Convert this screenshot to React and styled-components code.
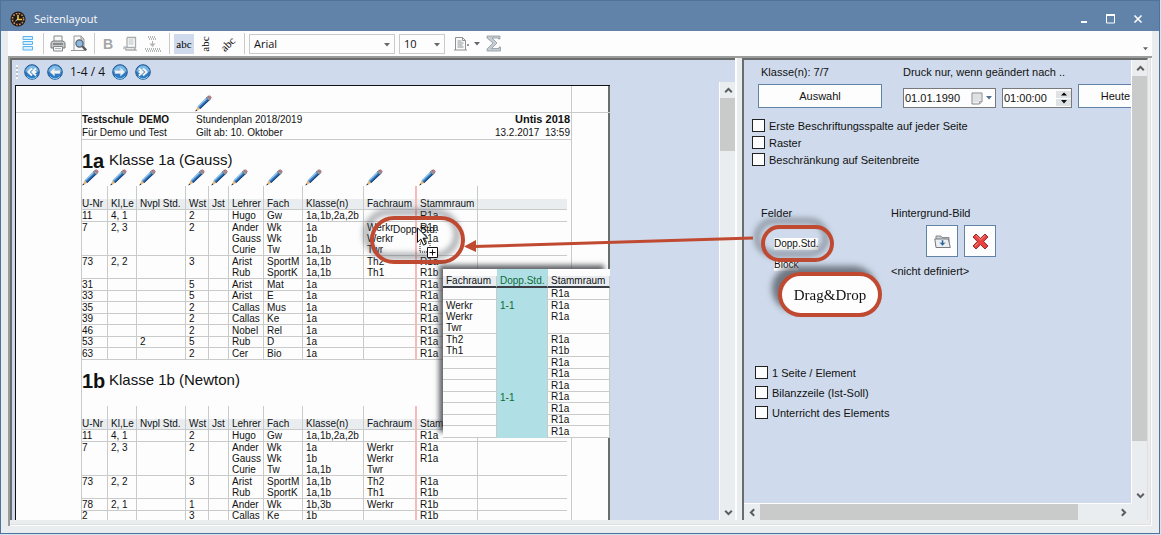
import React from 'react';
import styled, { createGlobalStyle, css } from 'styled-components';

const c = {
  title: '#6182a9',
  edge: '#4f749b',
  chrome: '#e9edf0',
  pane: '#cfdbec',
  rule: '#c9cbcb',
  thumb: '#c9cbca',
  dark: '#6b6d6d',
  mid: '#9a9d9c',
  red: '#c04a31',
  white: '#fdfdfd',
};

const Global = createGlobalStyle`
  *, *::before, *::after { box-sizing: border-box; }
  html, body { margin: 0; height: 100%; overflow: hidden; background: #d5e3f2; }
  body { font: 11px/14px "Liberation Sans", Arial, sans-serif; color: #111; }
  #root { height: 100%; }
  button, input, select { font: inherit; color: inherit; margin: 0; padding: 0; border: 0; border-radius: 0; background: none; }
  svg { display: block; flex: none; }
`;

const Window = styled.div`
  display: flex;
  flex-direction: column;
  height: calc(100% - 1px);
  margin-right: 1px;
  border: 1px solid ${c.edge};
  background: ${c.chrome};
`;

const TitleBar = styled.header`
  display: flex;
  flex: none;
  align-items: center;
  gap: 8px;
  height: 30px;
  padding: 6px 12px 0 9px;
  background: ${c.title};
  color: ${c.white};
`;

const Title = styled.h1`
  flex: 1;
  margin: 0;
  font: 11px/16px "Open Sans", sans-serif;
`;

const CaptionButton = styled.button`
  display: grid;
  place-items: center;
  width: 19px;
  height: 20px;
`;

const Caption = styled.div`
  display: flex;
  gap: 8px;
`;

const ToolBar = styled.div`
  display: flex;
  flex: none;
  align-items: center;
  height: 25px;
  margin: 0 7px;
  padding-left: 11px;
  background: ${c.white};
`;

const Tool = styled.button`
  display: grid;
  place-items: center;
  flex: none;
  width: ${(p) => p.$w || 22}px;
  height: 20px;
  background: ${(p) => (p.$on ? c.pane : 'none')};
`;

const Divider = styled.span`
  flex: none;
  width: 1px;
  height: 21px;
  margin: 0 ${(p) => p.$gap || 4}px;
  background: ${c.rule};
`;

const Abc = styled.span`
  font: 11px/12px "Liberation Serif", serif;
  color: #000;
  transform: rotate(${(p) => p.$turn || 0}deg);
`;

const Bold = styled.span`
  font: bold 14px/16px "Liberation Sans", sans-serif;
  color: #a3a6a8;
`;

const SelectBox = styled.span`
  position: relative;
  flex: none;
  width: ${(p) => p.$w}px;
  height: 20px;
  margin-right: 4px;
  border: 1px solid ${c.rule};
  select {
    width: 100%;
    height: 18px;
    padding-left: 4px;
    appearance: none;
    outline: 0;
    font: 11px/18px "Open Sans", sans-serif;
  }
  svg {
    position: absolute;
    right: 4px;
    top: 8px;
    pointer-events: none;
  }
`;

const Overflow = styled.span`
  margin: 10px 4px 0 auto;
`;

const Work = styled.main`
  position: relative;
  display: flex;
  flex: 1;
  min-height: 0;
  margin: 0 7px 7px;
  padding-bottom: 6px;
  border: solid ${c.mid};
  border-width: 2px 0 0 2px;
  box-shadow: inset -1px -1px ${c.white}, inset -2px -2px #dfe1e1;
`;

const pane = css`
  border: solid ${c.dark};
  border-width: 2px 0 0 2px;
  background: ${c.pane};
  overflow: hidden;
`;

const LeftPane = styled.section`
  ${pane}
  display: flex;
  flex-direction: column;
  flex: 1;
  min-width: 0;
`;

const Splitter = styled.div`
  flex: none;
  width: 7px;
  border-left: 2px solid ${c.white};
  background: ${c.chrome};
`;

const NavBar = styled.nav`
  display: flex;
  flex: none;
  align-items: center;
  gap: 7px;
  height: 22px;
  padding: 2px 4px 0;
`;

const Grip = styled.span`
  width: 2px;
  height: 14px;
  margin-right: -1px;
  background: repeating-linear-gradient(#f6f8fa 0 2px, #b6bfca 2px 4px);
`;

const NavButton = styled.button`
  width: 16px;
  height: 16px;
`;

const PageCount = styled.span`
  font: 12px/16px "Open Sans", sans-serif;
`;

const Row = styled.div`
  display: flex;
  flex: 1;
  min-height: 0;
`;

const Canvas = styled.div`
  display: flex;
  flex: 1;
  min-width: 0;
  padding: 3px 0 0 3px;
  overflow: hidden;
`;

const Paper = styled.article`
  position: relative;
  display: flex;
  flex: none;
  width: 595px;
  border: solid #111;
  border-width: 1px 0 0 1px;
  background: ${c.white};
  box-shadow: inset -2px 0 ${c.dark};
`;

const Margin = styled.div`
  flex: ${(p) => (p.$right ? '1' : '0 0 66px')};
  min-width: 0;
  border: solid ${c.rule};
  border-width: ${(p) => (p.$right ? '0 0 0 1px' : '0 1px 0 0')};
`;

const TopMargin = styled.div`
  display: flex;
  align-items: flex-end;
  height: 27px;
  padding-left: ${(p) => p.$in || 0}px;
  border-bottom: 1px solid ${c.rule};
`;

const Body = styled.div`
  flex: none;
  width: 489px;
  height: 0;
`;

const Head = styled.header`
  display: grid;
  grid-template-columns: 114px 1fr auto;
  height: 27px;
  padding-right: 1px;
  border-bottom: 1px solid ${c.rule};
  font-size: 10px;
  line-height: 13px;
  white-space: pre;
  > :nth-child(3n) { text-align: right; }
`;

const School = styled.strong`
  font-size: ${(p) => (p.$large ? 11 : 10)}px;
`;

const ClassTitle = styled.h2`
  display: flex;
  align-items: flex-start;
  height: 29px;
  margin: 0;
  padding-top: 10px;
  font: 15px/20px "Liberation Sans", Arial, sans-serif;
  b {
    width: 27px;
    font-size: 20px;
    line-height: 23px;
  }
`;

const Grid = styled.table`
  width: 100%;
  table-layout: fixed;
  border-collapse: separate;
  border-spacing: 0;
  font-size: 10px;
  line-height: 10px;
  white-space: nowrap;
  th { font-weight: normal; text-align: left; }
  tbody tr { height: 11px; }
  tbody tr:nth-child(odd) { height: 12px; }
`;

const PlanGrid = styled(Grid)`
  width: 485px;
`;

const Cell = styled.td`
  padding: 0 0 0 ${(p) => (p.$first ? 0 : 3)}px;
  border-right: ${(p) => (p.$line === 'none' ? '0' : p.$line === 'pink' ? '2px solid #f8b9b9' : `1px solid ${c.rule}`)};
  border-bottom: ${(p) => (p.$end ? `1px solid ${c.rule}` : '0')};
  background: ${(p) => (p.$aqua ? '#b0e0e6' : p.$shade ? c.chrome : 'transparent')};
  color: ${(p) => (p.$aqua ? '#0c6b34' : 'inherit')};
  height: ${(p) => (p.$h ? `${p.$h}px` : 'auto')};
  overflow: visible;
`;

const HeadCell = styled(Cell)`
  border-bottom: ${(p) => (p.$strong ? '2px solid #3b3d45' : `1px solid ${c.rule}`)};
`;

const PencilCell = styled.td`
  height: 17px;
  padding: 0 0 0 ${(p) => (p.$first ? 0 : 2)}px;
  vertical-align: top;
`;

const Preview = styled.aside`
  position: absolute;
  left: 427px;
  top: 183px;
  width: 167px;
  background: ${c.white};
  box-shadow: -5px -5px 5px -1px rgba(60, 62, 66, 0.8);
`;

const Ring = styled.div`
  position: absolute;
  display: grid;
  place-items: center;
  left: ${(p) => p.$x}px;
  top: ${(p) => p.$y}px;
  width: ${(p) => p.$w}px;
  height: ${(p) => p.$h}px;
  border: 4px solid ${c.red};
  border-radius: ${(p) => p.$h / 2}px;
  background: ${(p) => (p.$solid ? c.white : 'none')};
  filter: drop-shadow(-6px -6px 3px rgba(70, 76, 84, 0.7));
  pointer-events: none;
  font: 15px/18px "Liberation Serif", serif;
`;

const Dragged = styled.span`
  position: absolute;
  left: 377px;
  top: 138px;
  font-size: 10px;
  line-height: 11px;
`;

const Pointer = styled.svg`
  position: absolute;
  left: 401px;
  top: 141px;
`;

const Arrow = styled.svg`
  position: absolute;
  right: 398px;
  top: 176px;
  pointer-events: none;
`;

const ScrollTrack = styled.div`
  display: flex;
  flex: none;
  flex-direction: ${(p) => (p.$flat ? 'row' : 'column')};
  ${(p) => (p.$flat ? 'height: 17px; border-top: 1px solid #fdfdfd;' : 'width: 16px; border-left: 1px solid #fdfdfd;')}
  background: ${c.chrome};
`;

const ScrollButton = styled.button`
  display: grid;
  place-items: center;
  flex: none;
  width: 16px;
  height: 16px;
`;

const Thumb = styled.div`
  flex: ${(p) => p.$size} 1 0;
  background: ${c.thumb};
`;

const Rest = styled.div`
  flex: ${(p) => p.$size} 1 0;
`;

const RightPane = styled.section`
  ${pane}
  display: flex;
  flex-direction: column;
  flex: none;
  width: 406px;
  margin-right: 4px;
  border-right: 1px solid #dfe1e1;
`;

const Corner = styled.div`
  width: 16px;
  background: ${c.chrome};
`;

const FlatRow = styled.div`
  display: flex;
  flex: none;
  > :first-child { flex: 1; }
`;

const Form = styled.form`
  position: relative;
  flex: 1;
  min-width: 0;
  padding: 5px 0 0 8px;
  overflow: hidden;
  white-space: nowrap;
`;

const Filters = styled.div`
  display: grid;
  grid-template-columns: 145px 1fr;
  padding-left: 6px;
`;

const Caps = styled.label`
  display: block;
  height: 19px;
  padding-left: ${(p) => p.$in || 0}px;
`;

const FieldRow = styled.div`
  display: flex;
  align-items: flex-end;
  gap: 6px;
`;

const PushButton = styled.button`
  flex: none;
  width: ${(p) => p.$w}px;
  height: 24px;
  border: 1px solid ${c.title};
  background: ${c.white};
`;

const Field = styled.span`
  display: flex;
  flex: none;
  align-items: center;
  justify-content: space-between;
  width: ${(p) => p.$w}px;
  height: 20px;
  padding: 0 2px 0 1px;
  border: 1px solid #777a7d;
  background: ${c.white};
  input {
    width: 58px;
    outline: 0;
  }
`;

const Picker = styled.button`
  display: flex;
  align-items: center;
  gap: 2px;
`;

const Spin = styled.span`
  display: flex;
  flex: none;
  flex-direction: column;
  gap: 1px;
  button {
    display: grid;
    place-items: center;
    width: 15px;
    height: 7px;
    background: #dfe3e6;
  }
`;

const Checks = styled.div`
  display: flex;
  flex-direction: column;
  gap: ${(p) => p.$gap}px;
  margin: ${(p) => p.$top}px 0 0 ${(p) => p.$in}px;
`;

const Check = styled.label`
  display: flex;
  align-items: center;
  gap: 4px;
  height: 13px;
  input {
    width: 13px;
    height: 13px;
    appearance: none;
    border: 1px solid #222;
    background: ${c.white};
  }
`;

const Lower = styled.div`
  display: grid;
  grid-template-columns: 130px 1fr;
  height: 160px;
  padding: 40px 0 0 9px;
`;

const FieldList = styled.ul`
  display: flex;
  flex-direction: column;
  align-items: flex-start;
  gap: 9px;
  margin: 18px 0 0 13px;
  padding: 0;
  list-style: none;
  font-size: 10px;
  line-height: 12px;
  li { background: ${c.white}; }
`;

const IconButtons = styled.div`
  display: flex;
  gap: 6px;
  margin: 5px 0 7px 35px;
  button {
    display: grid;
    place-items: center;
    width: 32px;
    height: 32px;
    border: 1px solid ${c.title};
    background: ${c.white};
  }
`;

const Down = ({ w = 6, fill = '#66696c' }) => (
  <svg width={w} height="4" viewBox="0 0 6 4"><path d="M0 0h6L3 3.5z" fill={fill} /></svg>
);

const turns = { up: 0, right: 90, down: 180, left: 270 };
const Chevron = ({ to }) => (
  <svg width="9" height="9" viewBox="0 0 9 9">
    <path transform={`rotate(${turns[to]} 4.5 4.5)`} d="M1.2 6.2L4.5 2.9l3.3 3.3" fill="none" stroke="#5a5c5e" strokeWidth="2" />
  </svg>
);

const Pencil = () => (
  <svg width="17" height="17" viewBox="0 0 17 17">
    <path d="M.5 16.3L2.6 11.4 5.2 13.9z" fill="#e6b77c" />
    <path d="M.3 16.6l.9-2.2 1.3 1.2z" fill="#2b2b33" />
    <path d="M2.6 11.4L11.6 2.6l2.8 2.6-9.2 8.7z" fill="#2f74bd" />
    <path d="M2.8 11.2L11.6 2.6l1 .9-8.9 8.6z" fill="#8fc3ee" />
    <path d="M4.6 13.3l9.1-8.7.7.6-9.2 8.7z" fill="#1c3f70" />
    <path d="M11.2 3l1.7-1.700 2.800 2.600L14 5.500z" fill="#9aa0a8" stroke="#555b66" strokeWidth=".6" />
    <path d="M12.900 1.300Q14.300.2 15.600 1.300T15.700 3.900z" fill="#d98a86" stroke="#70506a" strokeWidth=".5" />
  </svg>
);

const NavIcon = ({ flip, double }) => (
  <svg width="16" height="16" viewBox="0 0 16 16">
    <circle cx="8" cy="8" r="7.3" fill="#2f7cc4" stroke="#28598f" />
    <path d="M1.500 8A6.500 6.500 0 0114.500 8Q8 4 1.500 8z" fill="#7db9e6" />
    <path d="M3 12.500Q8 17 13 12.500" stroke="#7fc6ee" fill="none" />
    <g transform={flip ? 'translate(16 0) scale(-1 1)' : undefined}>
      {double ? (
        <path d="M8 4.500L4.300 8 8 11.500M12 4.500L8.300 8 12 11.500M9 8h3.500" fill="none" stroke="#f4f4f2" strokeWidth="2" />
      ) : (
        <path d="M3 8l4.500-4v2.500H13v3H7.500V12z" fill="#f1f2f0" stroke="#c6d5e4" strokeWidth=".5" />
      )}
    </g>
  </svg>
);

const Clock = () => (
  <svg width="16" height="16" viewBox="0 0 16 16">
    <circle cx="8" cy="8" r="7.500" fill="#1f1a18" />
    <circle cx="8" cy="8" r="5.600" fill="none" stroke="#c98a5a" strokeWidth="1.600" strokeDasharray="1.700 1.230" />
    <path d="M8 4v4.500h4" fill="none" stroke="#f0c33a" strokeWidth="1.600" />
    <path d="M8 8L5.500 10" stroke="#e8e4dc" />
  </svg>
);

const RowsIcon = () => (
  <svg width="12" height="15" viewBox="0 0 12 15">
    <path d="M1 .5h9.500v3H1zM1 5.500h9.500v3H1zM1 10.500h9.500v3.500H1z" fill="#d9effc" stroke="#5bb4ee" />
  </svg>
);

const Printer = () => (
  <svg width="16" height="17" viewBox="0 0 16 17">
    <path d="M4 6.500V1h8v5.500" fill="#f7f8f8" stroke="#85888b" />
    <path d="M1 7.500L3 6h10l2 1.500V13H1z" fill="#c6c9cb" stroke="#76797c" />
    <path d="M3 9h10" stroke="#6d7073" strokeWidth="1.400" />
    <path d="M3.500 11.500h9V16h-9z" fill="#f4f5f5" stroke="#85888b" />
    <path d="M5 13.500h6" stroke="#b3b6b8" />
  </svg>
);

const FindPage = () => (
  <svg width="17" height="17" viewBox="0 0 17 17">
    <path d="M3 15.500V1h7l3 3v11.500" fill="#fafafa" stroke="#94979a" />
    <path d="M10 1v3h3M0 15.500h14" fill="none" stroke="#94979a" />
    <circle cx="8.500" cy="8.500" r="3.600" fill="#8db7dd" stroke="#52616f" strokeWidth="1.200" />
    <path d="M11.300 11.300l4 4" stroke="#54585c" strokeWidth="2.200" />
  </svg>
);

const CopyPage = () => (
  <svg width="16" height="16" viewBox="0 0 16 16">
    <path d="M5 1.500h8.500V12M5 1.500v9.500M3 11.500h9l2 2.500H4z" fill="none" stroke="#a9acae" strokeWidth="1.300" />
    <path d="M6.500 4h5M6.500 6h5M6.500 8h5M1 13l3-2M1 11h3" stroke="#b8bbbd" />
  </svg>
);

const InsertIcon = () => (
  <svg width="17" height="16" viewBox="0 0 17 16">
    <path d="M4 1h8M5 3h8M1 13h15M2 15h15" stroke="#9b9ea0" strokeDasharray="1 1" strokeWidth="1.500" />
    <path d="M8 5h1v2.500h2.500l-3 3.500-3-3.500H8z" fill="#b0b3b5" />
  </svg>
);

const DocIcon = () => (
  <svg width="15" height="15" viewBox="0 0 15 15">
    <path d="M1.500 14V1.500h7l3 3V14M0 14h13" fill="#fafafa" stroke="#8f9295" />
    <path d="M8.500 1.500v3h3M3.500 5h4M3.500 7h6M3.500 9h5M3.500 11h6" fill="none" stroke="#8f9295" />
    <path d="M14 8v2" stroke="#333" />
  </svg>
);

const Sigma = () => (
  <svg width="16" height="17" viewBox="0 0 16 17">
    <path d="M1 1h13v3h-1.500V3H6l5 5-5.500 5.500H13V12h1.500v4H1v-2l6-6-6-5z" fill="#c3cdd6" stroke="#92979c" strokeWidth=".8" />
  </svg>
);

const Calendar = () => (
  <svg width="12" height="13" viewBox="0 0 12 13">
    <path d="M1 1h10v8.500L8.500 12H1z" fill="#f2f2f2" stroke="#85888b" />
    <path d="M2.500 3h7M2.500 5h7M2.500 7h7M2.500 9h5" stroke="#a9adb3" strokeDasharray="1 1" />
    <path d="M11 9.500H8.500V12" fill="#ccc" stroke="#85888b" strokeWidth=".7" />
  </svg>
);

const Folder = () => (
  <svg width="17" height="15" viewBox="0 0 17 15">
    <path d="M2 12V2h5l1 1.500h7V12" fill="#c9ccce" stroke="#888c90" />
    <path d="M.8 5h13.500l2 8.500H2z" fill="#eceeef" stroke="#777c82" />
    <path d="M7.500 6h2v2.500h2.300L8.500 12 5.200 8.500h2.300z" fill="#2d6295" stroke="#dbe8f2" strokeWidth=".5" />
  </svg>
);

const Cross = () => (
  <svg width="17" height="17" viewBox="0 0 17 17">
    <path d="M4 1l4.500 4.300L13 1l3 3-4.300 4.500L16 13l-3 3-4.500-4.300L4 16l-3-3 4.300-4.500L1 4z" fill="#e9413f" stroke="#8f2c30" strokeLinejoin="round" />
    <path d="M4 2.500l4.500 4.300L13 2.500M3 13l3-3" fill="none" stroke="#f68d85" />
  </svg>
);

const columns = ['U-Nr', 'Kl,Le', 'Nvpl Std.', 'Wst', 'Jst', 'Lehrer', 'Fach', 'Klasse(n)', 'Fachraum', 'Stammraum', ''];
const widths = [26, 29, 49, 23, 20, 35, 39, 61, 53, 61, 89];

const shared = [
  ['11', '4, 1', '', '2', '', 'Hugo', 'Gw', '1a,1b,2a,2b', '', 'R1a', 1],
  ['7', '2, 3', '', '2', '', 'Ander', 'Wk', '1a', 'Werkr', 'R1a', 0],
  ['', '', '', '', '', 'Gauss', 'Wk', '1b', 'Werkr', 'R1a', 0],
  ['', '', '', '', '', 'Curie', 'Tw', '1a,1b', 'Twr', '', 1],
  ['73', '2, 2', '', '3', '', 'Arist', 'SportM', '1a,1b', 'Th2', 'R1a', 0],
  ['', '', '', '', '', 'Rub', 'SportK', '1a,1b', 'Th1', 'R1b', 1],
];
const single = (nr, wst, teacher, subject, nvpl = '') => [nr, '', nvpl, wst, '', teacher, subject, '1a', '', 'R1a', 1];

const plans = [
  {
    id: '1a',
    name: 'Klasse 1a (Gauss)',
    pencils: true,
    rows: [
      ...shared,
      single('31', '5', 'Arist', 'Mat'),
      single('33', '5', 'Arist', 'E'),
      single('35', '2', 'Callas', 'Mus'),
      single('39', '2', 'Callas', 'Ke'),
      single('46', '2', 'Nobel', 'Rel'),
      single('53', '5', 'Rub', 'D', '2'),
      single('63', '2', 'Cer', 'Bio'),
    ],
  },
  {
    id: '1b',
    name: 'Klasse 1b (Newton)',
    rows: [
      ...shared,
      ['78', '2, 1', '', '1', '', 'Ander', 'Wk', '1b,3b', 'Werkr', 'R1b', 1],
      ['2', '', '', '3', '', 'Callas', 'Ke', '1b', '', 'R1b', 1],
    ],
  },
];

const lineOf = (i) => (i === 8 ? 'pink' : i === 10 ? 'none' : 'grey');

const Plan = ({ plan }) => (
  <section>
    <ClassTitle><b>{plan.id}</b>{plan.name}</ClassTitle>
    <PlanGrid>
      <colgroup>{widths.map((w, i) => <col key={i} width={w} />)}</colgroup>
      <thead>
        <tr>{columns.map((n, i) => <PencilCell key={i} $first={!i}>{plan.pencils && n && <Pencil />}</PencilCell>)}</tr>
        <tr>{columns.map((n, i) => <Cell key={i} $h={13} $line={lineOf(i)} />)}</tr>
        <tr>{columns.map((n, i) => <HeadCell as="th" key={i} $first={!i} $shade $line={lineOf(i)}>{n}</HeadCell>)}</tr>
      </thead>
      <tbody>
        {plan.rows.map((row, r) => (
          <tr key={r}>
            {columns.map((n, i) => (
              <Cell key={i} $first={!i} $line={lineOf(i)} $end={row[10]}>{i < 10 ? row[i] : ''}</Cell>
            ))}
          </tr>
        ))}
      </tbody>
    </PlanGrid>
  </section>
);

const PreviewGrid = () => (
  <Grid>
    <colgroup><col width="54" /><col width="51" /><col width="62" /></colgroup>
    <thead>
      <tr><Cell $h={7} $line="none" /><Cell $aqua $line="none" /><Cell $line="none" /></tr>
      <tr>
        <HeadCell as="th" $shade $strong>Fachraum</HeadCell>
        <HeadCell as="th" $aqua $strong>Dopp.Std.</HeadCell>
        <HeadCell as="th" $shade $strong>Stammraum</HeadCell>
      </tr>
    </thead>
    <tbody>
      {plans[0].rows.map((row, r) => (
        <tr key={r}>
          <Cell $end={row[10]}>{row[8]}</Cell>
          <Cell $aqua>{r === 1 || r === 9 ? '1-1' : ''}</Cell>
          <Cell $end={row[10]}>{row[9]}</Cell>
        </tr>
      ))}
    </tbody>
  </Grid>
);

const Scroll = ({ flat, before = 0, thumb, after }) => (
  <ScrollTrack $flat={flat}>
    <ScrollButton type="button" aria-label="Zurück"><Chevron to={flat ? 'left' : 'up'} /></ScrollButton>
    <Rest $size={before} />
    <Thumb $size={thumb} />
    <Rest $size={after} />
    <ScrollButton type="button" aria-label="Weiter"><Chevron to={flat ? 'right' : 'down'} /></ScrollButton>
  </ScrollTrack>
);

const Option = ({ children }) => <Check><input type="checkbox" />{children}</Check>;

export default function App() {
  return (
    <Window>
      <Global />
      <TitleBar>
        <Clock />
        <Title>Seitenlayout</Title>
        <Caption>
          <CaptionButton aria-label="Minimieren"><svg width="10" height="10"><path d="M2 8h6" stroke="#fff" strokeWidth="2" /></svg></CaptionButton>
          <CaptionButton aria-label="Maximieren"><svg width="10" height="10"><path d="M.5 1h8v8h-8z" fill="none" stroke="#fff" /><path d="M0 1h9" stroke="#fff" strokeWidth="2" /></svg></CaptionButton>
          <CaptionButton aria-label="Schließen"><svg width="10" height="10"><path d="M1.500 1.500l7 7M8.500 1.500l-7 7" stroke="#fff" strokeWidth="1.600" /></svg></CaptionButton>
        </Caption>
      </TitleBar>
      <ToolBar>
        <Tool $w={18} aria-label="Liste"><RowsIcon /></Tool>
        <Divider $gap={6} />
        <Tool $w={16} aria-label="Drucken"><Printer /></Tool>
        <Tool $w={27} aria-label="Seitenansicht"><FindPage /></Tool>
        <Divider $gap={1} />
        <Tool $w={24} aria-label="Fett"><Bold>B</Bold></Tool>
        <Tool $w={20} aria-label="Seitenumbruch"><CopyPage /></Tool>
        <Tool $w={25} aria-label="Einfügen"><InsertIcon /></Tool>
        <Divider />
        <Tool $w={20} $on><Abc>abc</Abc></Tool>
        <Tool><Abc $turn={-90}>abc</Abc></Tool>
        <Tool $w={24}><Abc $turn={-45}>abc</Abc></Tool>
        <Divider />
        <SelectBox $w={146}><select aria-label="Schriftart"><option>Arial</option></select><Down /></SelectBox>
        <SelectBox $w={46}><select aria-label="Schriftgröße"><option>10</option></select><Down /></SelectBox>
        <Tool $w={24} aria-label="Format"><DocIcon /></Tool>
        <Tool $w={8} aria-label="Formatauswahl"><Down /></Tool>
        <Tool $w={26} aria-label="Summe"><Sigma /></Tool>
        <Overflow><Down w={5} /></Overflow>
      </ToolBar>
      <Work>
        <LeftPane>
          <NavBar>
            <Grip />
            <NavButton aria-label="Erste Seite"><NavIcon double /></NavButton>
            <NavButton aria-label="Vorige Seite"><NavIcon /></NavButton>
            <PageCount>1-4 / 4</PageCount>
            <NavButton aria-label="Nächste Seite"><NavIcon flip /></NavButton>
            <NavButton aria-label="Letzte Seite"><NavIcon flip double /></NavButton>
          </NavBar>
          <Row>
            <Canvas>
              <Paper>
                <Margin><TopMargin /></Margin>
                <Body>
                  <TopMargin $in={113}><Pencil /></TopMargin>
                  <Head>
                    <School>{'Testschule  DEMO'}</School>
                    <span>Stundenplan 2018/2019</span>
                    <School $large>Untis 2018</School>
                    <span>Für Demo und Test</span>
                    <span>Gilt ab: 10. Oktober</span>
                    <span>{'13.2.2017  13:59'}</span>
                  </Head>
                  {plans.map((p) => <Plan key={p.id} plan={p} />)}
                </Body>
                <Margin $right><TopMargin /></Margin>
                <Ring $x={354} $y={130} $w={95} $h={48} />
                <Dragged>Dopp.Std.</Dragged>
                <Preview><PreviewGrid /></Preview>
                <Pointer width="22" height="31" viewBox="0 0 22 31">
                  <path d="M3 16h10v9H3z" fill="none" stroke="#111" strokeDasharray="1 1" />
                  <path d="M.5.8v14.500l3.300-3.200 2.700 6 2.300-1-2.700-5.900h4.600z" fill="#fff" stroke="#111" />
                  <path d="M10.500 20.500h10v10h-10z" fill="#fff" stroke="#111" />
                  <path d="M15.500 22.500v6M12.500 25.500h6" stroke="#111" />
                </Pointer>
              </Paper>
            </Canvas>
            <Scroll thumb={53} after={353} />
          </Row>
        </LeftPane>
        <Splitter />
        <RightPane>
          <Row>
            <Form onSubmit={(e) => e.preventDefault()}>
              <Filters>
                <div>
                  <Caps as="div" $in={3}>Klasse(n): 7/7</Caps>
                  <PushButton type="button" $w={124}>Auswahl</PushButton>
                </div>
                <div>
                  <Caps htmlFor="since">Druck nur, wenn geändert nach ..</Caps>
                  <FieldRow>
                    <Field $w={93}>
                      <input id="since" defaultValue="01.01.1990" />
                      <Picker type="button" aria-label="Kalender"><Calendar /><Down w={8} fill="#4f6f93" /></Picker>
                    </Field>
                    <Field $w={70}>
                      <input aria-label="Uhrzeit" defaultValue="01:00:00" size="6" />
                      <Spin>
                        <button type="button" aria-label="Später"><svg width="6" height="4"><path d="M0 3.500h6L3 .5z" /></svg></button>
                        <button type="button" aria-label="Früher"><Down fill="#111" /></button>
                      </Spin>
                    </Field>
                    <PushButton type="button" $w={75}>Heute</PushButton>
                  </FieldRow>
                </div>
              </Filters>
              <Checks $gap={4} $top={11} $in={0}>
                <Option>Erste Beschriftungsspalte auf jeder Seite</Option>
                <Option>Raster</Option>
                <Option>Beschränkung auf Seitenbreite</Option>
              </Checks>
              <Lower>
                <div>
                  Felder
                  <FieldList>
                    <li>Dopp.Std.</li>
                    <li>Block</li>
                  </FieldList>
                </div>
                <div>
                  Hintergrund-Bild
                  <IconButtons>
                    <button type="button" aria-label="Bild laden"><Folder /></button>
                    <button type="button" aria-label="Bild löschen"><Cross /></button>
                  </IconButtons>
                  &lt;nicht definiert&gt;
                </div>
              </Lower>
              <Checks $gap={7} $top={40} $in={3}>
                <Option>1 Seite / Element</Option>
                <Option>Bilanzzeile (Ist-Soll)</Option>
                <Option>Unterricht des Elements</Option>
              </Checks>
              <Ring $x={17} $y={165} $w={73} $h={37} />
              <Ring $x={34} $y={212} $w={104} $h={45} $solid>Drag&amp;Drop</Ring>
            </Form>
            <Scroll thumb={364} after={46} />
          </Row>
          <FlatRow>
            <Scroll flat thumb={319} after={37} />
            <Corner />
          </FlatRow>
        </RightPane>
        <Arrow width="290" height="20" viewBox="0 0 290 20">
          <path d="M10 12.500L289 4" stroke={c.red} strokeWidth="3" />
          <path d="M0 12.500L12 6v12z" fill={c.red} />
        </Arrow>
      </Work>
    </Window>
  );
}
